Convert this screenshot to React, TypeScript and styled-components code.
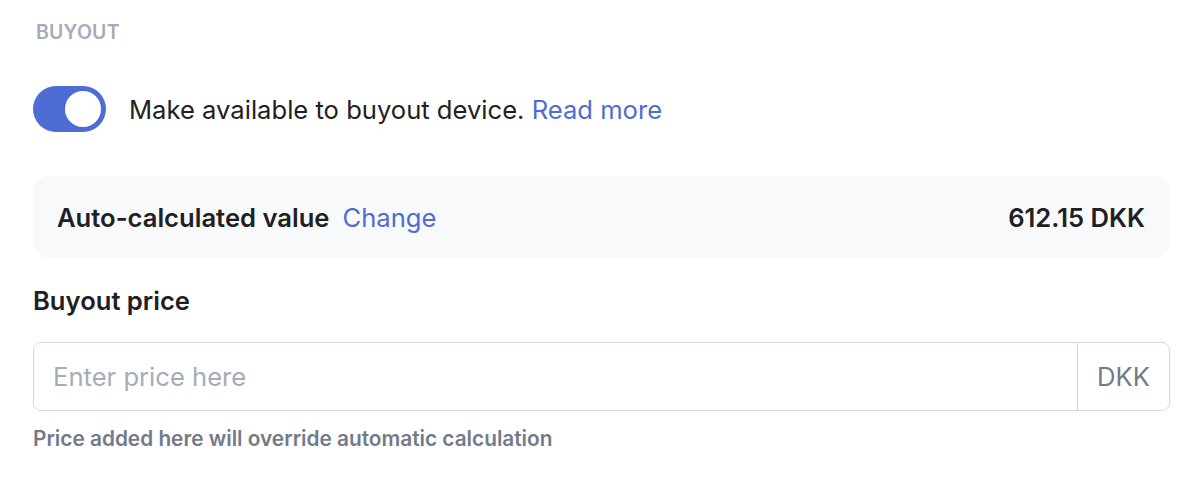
import React, { useState } from "react";
import styled, { createGlobalStyle } from "styled-components";

const GlobalStyle = createGlobalStyle`
  body {
    margin: 0;
    background: #fff;
    font-family: Inter, "Noto Sans", sans-serif;
    -webkit-font-smoothing: antialiased;
  }
`;

const Section = styled.div`
  width: 1137px;
  padding: 17px 0 0 33px;
  display: flex;
  flex-direction: column;
`;

const Heading = styled.div`
  margin-left: 3px;
  color: #a4acb9;
  font-size: 19.5px;
  font-weight: 600;
  letter-spacing: 0.01em;
  line-height: 30px;
`;

const ToggleRow = styled.div`
  display: flex;
  align-items: center;
  gap: 23px;
  margin-top: 39px;
`;

const Track = styled.button<{ on: boolean }>`
  position: relative;
  width: 73px;
  height: 46px;
  border: none;
  padding: 0;
  border-radius: 23px;
  background: ${(p) => (p.on ? "#4f6bd4" : "#d0d5dd")};
  cursor: pointer;
  flex-shrink: 0;
`;

const Knob = styled.span<{ on: boolean }>`
  position: absolute;
  top: 5px;
  left: ${(p) => (p.on ? "32px" : "5px")};
  width: 36px;
  height: 36px;
  border-radius: 50%;
  background: #fff;
  transition: left 0.15s;
`;

const ToggleLabel = styled.span`
  color: #1f2023;
  font-size: 25.6px;
  line-height: 32px;
  padding-top: 2px;
`;

const Link = styled.a`
  color: #4f6bd4;
  text-decoration: none;
  cursor: pointer;
`;

const ValueCard = styled.div`
  margin-top: 44px;
  height: 82px;
  box-sizing: border-box;
  padding: 0 25px 0 24px;
  display: flex;
  align-items: center;
  justify-content: space-between;
  background: #f8f9fb;
  border-radius: 17px;
`;

const CardLeft = styled.div`
  display: flex;
  align-items: center;
  gap: 13px;
  font-size: 25.6px;
`;

const Strong = styled.span`
  color: #1f2023;
  font-weight: 600;
  font-size: 25.6px;
`;

const FieldLabel = styled.label`
  margin-top: 27px;
  color: #1f2023;
  font-weight: 600;
  font-size: 25.6px;
  line-height: 32px;
`;

const InputGroup = styled.div`
  margin-top: 25px;
  height: 69px;
  display: flex;
  border: 1px solid #d3d8e0;
  border-radius: 8px;
  box-sizing: border-box;
  overflow: hidden;
`;

const PriceInput = styled.input`
  flex: 1;
  border: none;
  outline: none;
  padding: 0 19px;
  font-family: inherit;
  font-size: 25.6px;
  color: #1f2023;
  &::placeholder {
    color: #a4acb9;
  }
`;

const Addon = styled.div`
  width: 91px;
  display: flex;
  align-items: center;
  justify-content: center;
  border-left: 1px solid #d3d8e0;
  color: #737b88;
  font-size: 25.6px;
`;

const Hint = styled.div`
  margin-top: 15px;
  color: #737b88;
  font-size: 20.8px;
  font-weight: 600;
  line-height: 26px;
`;

export default function App() {
  const [on, setOn] = useState(true);
  return (
    <>
      <GlobalStyle />
      <Section>
        <Heading>BUYOUT</Heading>
        <ToggleRow>
          <Track on={on} onClick={() => setOn(!on)}>
            <Knob on={on} />
          </Track>
          <ToggleLabel>
            Make available to buyout device. <Link>Read more</Link>
          </ToggleLabel>
        </ToggleRow>
        <ValueCard>
          <CardLeft>
            <Strong>Auto-calculated value</Strong>
            <Link>Change</Link>
          </CardLeft>
          <Strong>612.15 DKK</Strong>
        </ValueCard>
        <FieldLabel>Buyout price</FieldLabel>
        <InputGroup>
          <PriceInput placeholder="Enter price here" />
          <Addon>DKK</Addon>
        </InputGroup>
        <Hint>Price added here will override automatic calculation</Hint>
      </Section>
    </>
  );
}
